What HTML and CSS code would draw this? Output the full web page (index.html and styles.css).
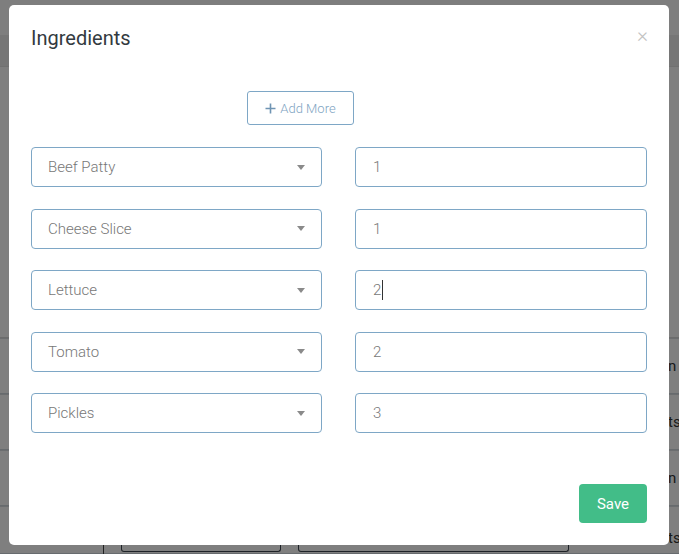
FILE: index.html
```html
<!DOCTYPE html>
<html lang="en">
<head>
<meta charset="utf-8">
<title>Ingredients</title>
<link rel="stylesheet" href="styles.css">
</head>
<body>
<div class="page">
  <div class="topbar"></div>
  <div class="navband"></div>
  <div class="content">
    <div class="table">
      <div class="trow"><span class="tcell">n</span></div>
      <div class="trow"><span class="tcell">ts</span></div>
      <div class="trow"><span class="tcell">n</span></div>
      <div class="trow trow-last"><span class="tcell">ts</span></div>
    </div>
    <div class="footer-row">
      <div class="fbox fbox-a"></div>
      <div class="fbox fbox-b"></div>
    </div>
  </div>
</div>

<div class="overlay">
  <div class="modal">
    <div class="modal-header">
      <h2 class="modal-title">Ingredients</h2>
      <span class="close">&times;</span>
    </div>
    <div class="modal-body">
      <button class="add-more" type="button">
        <svg class="plus" width="11" height="11" viewBox="0 0 11 11"><path d="M5.5 0.5v10M0.5 5.5h10" stroke="currentColor" stroke-width="1.6" fill="none"/></svg>
        Add More
      </button>
      <div class="rows">
        <div class="select"><span>Beef Patty</span><span class="caret"></span></div>
        <div class="field">1</div>
        <div class="select"><span>Cheese Slice</span><span class="caret"></span></div>
        <div class="field">1</div>
        <div class="select"><span>Lettuce</span><span class="caret"></span></div>
        <div class="field">2<span class="text-cursor"></span></div>
        <div class="select"><span>Tomato</span><span class="caret"></span></div>
        <div class="field">2</div>
        <div class="select"><span>Pickles</span><span class="caret"></span></div>
        <div class="field">3</div>
      </div>
    </div>
    <div class="modal-footer">
      <button class="save" type="button">Save</button>
    </div>
  </div>
</div>
</body>
</html>
```

FILE: styles.css
```css
* { box-sizing: border-box; }

html, body {
  margin: 0;
  padding: 0;
  width: 679px;
  height: 554px;
  overflow: hidden;
  font-family: Roboto, "Liberation Sans", sans-serif;
  background: #ffffff;
}

/* underlying page (mostly hidden by overlay) */
.page {
  width: 679px;
  height: 554px;
  display: flex;
  flex-direction: column;
}
.topbar { height: 36px; background: #fdfdfd; }
.navband { height: 32px; background: #ececec; border-bottom: 1px solid #e2e2e2; }
.content {
  flex: 1;
  display: flex;
  flex-direction: column;
  padding-top: 270px;
}
.table {
  display: flex;
  flex-direction: column;
  border-top: 1px solid #d9d9d9;
}
.trow {
  height: 56px;
  display: flex;
  align-items: center;
  padding-left: 668px;
  border-bottom: 1px solid #cfd6dc;
  box-shadow: inset 0 28px 0 -27px #d9dde0;
  font-size: 15px;
  color: #333;
  white-space: nowrap;
}
.trow-last { height: 48px; align-items: flex-end; padding-bottom: 6px; }
.footer-row {
  display: flex;
  gap: 17px;
  margin-left: 103px;
  padding-left: 17px;
  border-left: 1px solid #444;
  margin-top: -10px;
  height: 10px;
}
.fbox { height: 8px; border: 1px solid #3e4650; border-top: none; border-radius: 0 0 3px 3px; }
.fbox-a { width: 160px; }
.fbox-b { width: 271px; }

/* overlay & modal */
.overlay {
  position: fixed;
  inset: 0;
  background: rgba(0, 0, 0, 0.5);
  padding: 5px 10px 9px 9px;
}
.modal {
  width: 660px;
  height: 540px;
  background: #fff;
  border-radius: 5px;
  display: flex;
  flex-direction: column;
  padding: 0 22px 22px 22px;
}
.modal-header {
  display: flex;
  justify-content: space-between;
  align-items: flex-start;
  padding-top: 21px;
  height: 66px;
}
.modal-title {
  margin: 0;
  font-size: 20px;
  font-weight: 400;
  line-height: 24px;
  color: #333a40;
}
.close {
  font-size: 21px;
  line-height: 21px;
  color: #c2c2c2;
  margin-top: -1px;
  margin-right: -1px;
  font-weight: 300;
}

.modal-body {
  flex: 1;
  display: flex;
  flex-direction: column;
  padding-top: 20px;
}
.add-more {
  align-self: flex-start;
  margin-left: 216px;
  width: 107px;
  height: 34px;
  border: 1px solid #7ea7c6;
  border-radius: 3px;
  background: #fff;
  color: #80a4c2;
  font-family: Roboto, "Liberation Sans", sans-serif;
  font-size: 13px;
  font-weight: 300;
  display: flex;
  align-items: center;
  justify-content: center;
  gap: 4px;
  padding: 0;
}
.plus { color: #6f94b3; }

.rows {
  margin-top: 22px;
  display: grid;
  grid-template-columns: 291px 292px;
  column-gap: 33px;
  row-gap: 21.5px;
}
.select, .field {
  height: 40px;
  border: 1px solid #7ea7c6;
  border-radius: 4px;
  display: flex;
  align-items: center;
  padding-left: 16px;
  font-size: 15px;
  color: #777;
  font-weight: 300;
}
.select { justify-content: space-between; padding-right: 16px; }
.field { padding-left: 17px; }
.caret {
  width: 0;
  height: 0;
  border-left: 4px solid transparent;
  border-right: 4px solid transparent;
  border-top: 5px solid #8a8a8a;
}
.text-cursor {
  display: inline-block;
  width: 1px;
  height: 20px;
  background: #333;
  margin-left: 1px;
}

.modal-footer {
  display: flex;
  justify-content: flex-end;
}
.save {
  width: 68px;
  height: 39px;
  border: none;
  border-radius: 4px;
  background: #42bd88;
  color: #fff;
  font-family: Roboto, "Liberation Sans", sans-serif;
  font-size: 15px;
  padding: 0;
}
```
